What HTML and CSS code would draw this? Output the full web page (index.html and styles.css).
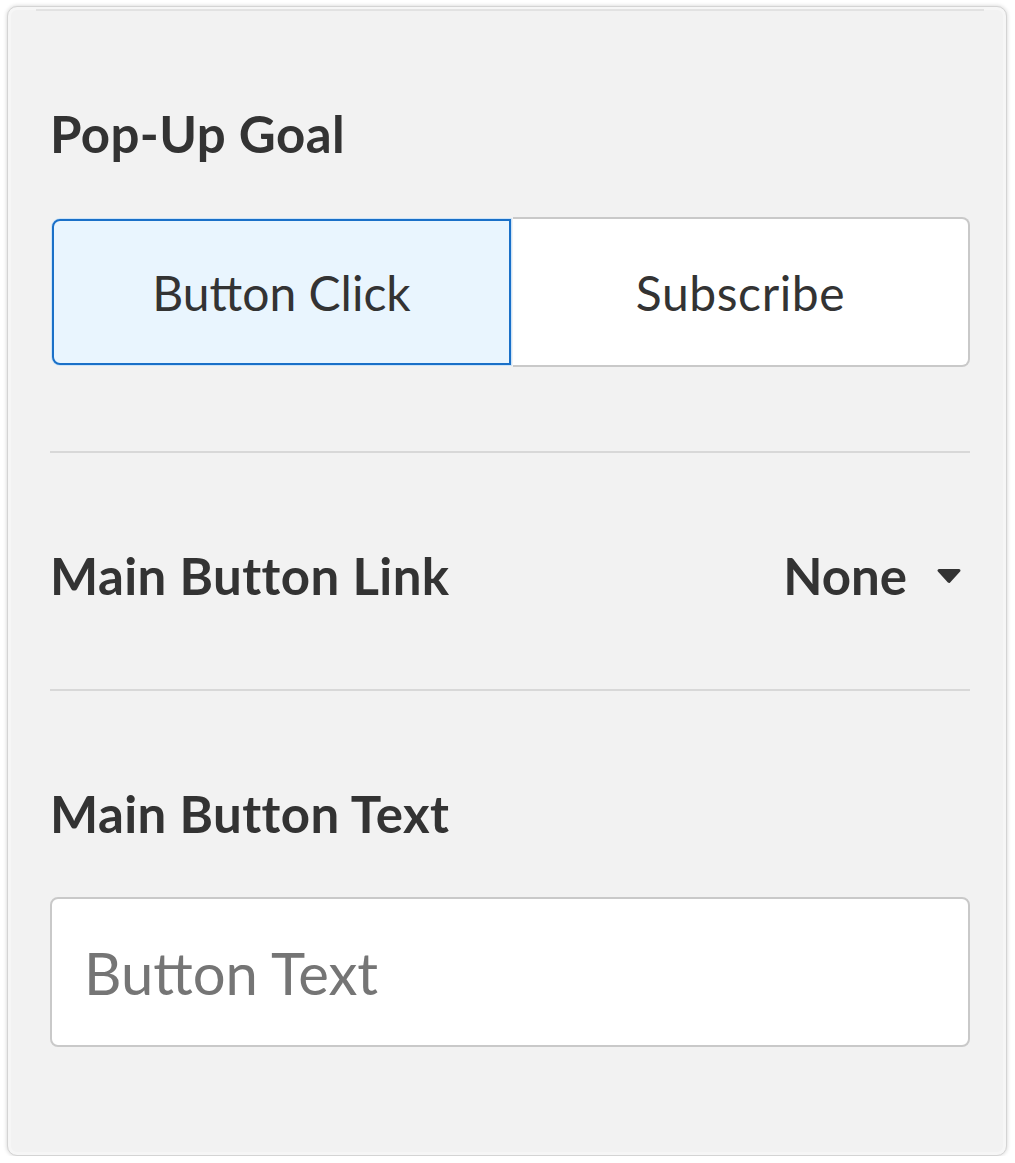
FILE: index.html
```html
<!DOCTYPE html>
<html lang="en">
<head>
    <meta charset="UTF-8">
    <meta name="viewport" content="width=device-width, initial-scale=1.0">
    <title>Pop-Up Settings</title>
    <link rel="stylesheet" href="styles.css">
</head>
<body>
    <div class="panel">
        <div class="panel-rule"></div>

        <!-- Goal -->
        <section class="field">
            <h2 class="field-title">Pop-Up Goal</h2>
            <div class="goal-toggle">
                <button class="goal-option active">Button Click</button>
                <button class="goal-option">Subscribe</button>
            </div>
        </section>

        <hr class="divider">

        <!-- Link -->
        <section class="field link-field">
            <div class="link-row">
                <h2 class="field-title">Main Button Link</h2>
                <button class="link-select">
                    None
                    <svg class="caret" width="26" height="16" viewBox="0 0 26 16">
                        <path d="M3 2.5 H23 L13 13.5 Z" fill="#333" stroke="#333" stroke-width="3" stroke-linejoin="round"/>
                    </svg>
                </button>
            </div>
        </section>

        <hr class="divider">

        <!-- Text -->
        <section class="field">
            <h2 class="field-title">Main Button Text</h2>
            <input type="text" class="text-input" placeholder="Button Text">
        </section>
    </div>
</body>
</html>
```

FILE: styles.css
```css
body {
    margin: 0;
    background-color: #ffffff;
    font-family: Lato, "Open Sans", Arial, sans-serif;
    color: #333;
}

.panel {
    box-sizing: border-box;
    width: 1000px;
    height: 1150px;
    margin: 6px 0 0 7px;
    padding: 2px 36px 0 42px;
    background-color: #f2f2f2;
    border: 1px solid #d4d4d4;
    border-radius: 10px;
    box-shadow: 0 0 4px rgba(0, 0, 0, 0.18), inset 0 0 0 3px rgba(255, 255, 255, 0.35);
}

.panel-rule {
    height: 2px;
    margin: 0 -14px 0 -14px;
    background-color: #e2e2e2;
}

.field {
    padding: 97px 0 84px;
}

.link-field {
    padding-bottom: 88px;
}

.field-title {
    margin: 0;
    font-size: 51px;
    line-height: 1;
    font-weight: 700;
    letter-spacing: 0.4px;
    color: #333;
}

.goal-toggle {
    display: flex;
    height: 150px;
    margin: 58px 0 0 2px;
}

.goal-option {
    flex: 1;
    padding: 0;
    background-color: #ffffff;
    border: 2px solid #c9c9c9;
    border-left: none;
    border-radius: 0 8px 8px 0;
    font-family: inherit;
    font-size: 48px;
    color: #333;
    cursor: pointer;
}

.goal-option:last-child {
    letter-spacing: 0.6px;
}

.goal-option.active {
    margin: 2px 2px 2px 0;
    background-color: #e9f5fe;
    border: 2px solid #1a70c8;
    border-radius: 8px 0 0 8px;
    box-shadow: 0 0 0 1px #cde4f8;
}

.divider {
    height: 2px;
    margin: 0;
    border: none;
    background-color: #d8d8d8;
}

.link-row {
    display: flex;
    justify-content: space-between;
    align-items: center;
}

.link-select {
    display: flex;
    align-items: center;
    gap: 29px;
    padding: 0 8px 0 0;
    background: none;
    border: none;
    font-family: inherit;
    font-size: 51px;
    font-weight: 700;
    line-height: 1;
    color: #333;
    cursor: pointer;
}

.caret {
    display: block;
}

.text-input {
    box-sizing: border-box;
    display: block;
    width: 100%;
    height: 150px;
    margin-top: 58px;
    padding: 0 0 0 32px;
    background-color: #ffffff;
    border: 2px solid #c9c9c9;
    border-radius: 8px;
    font-family: inherit;
    font-size: 58px;
    color: #333;
}

.text-input::placeholder {
    color: #757575;
}
```
